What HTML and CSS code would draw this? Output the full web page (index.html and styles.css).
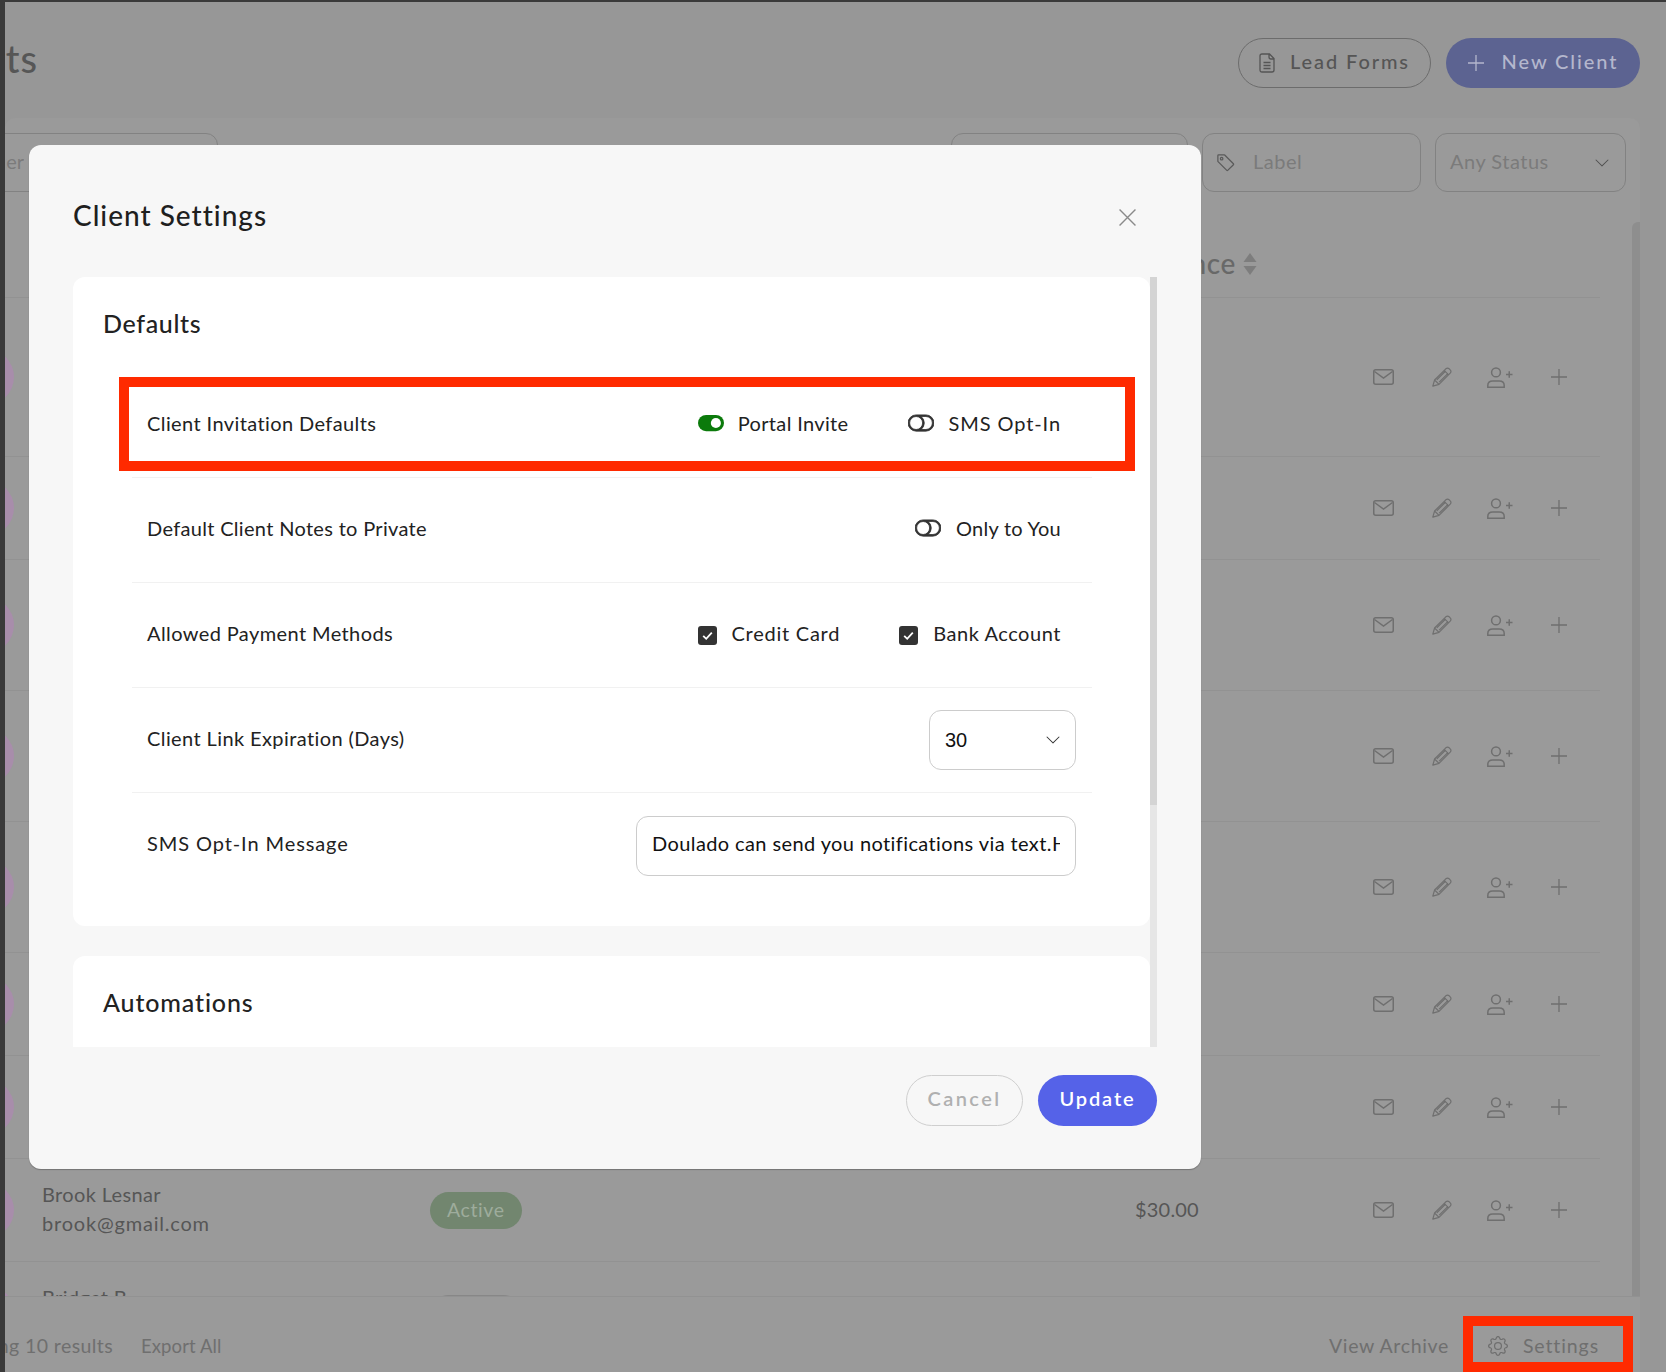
FILE: index.html
```html
<!DOCTYPE html>
<html lang="en">
<head>
<meta charset="utf-8">
<title>Client Settings</title>
<link rel="stylesheet" href="styles.css">
</head>
<body>
<svg class="defs" width="0" height="0">
  <defs>
    <symbol id="i-mail" viewBox="0 0 21 16"><rect x=".75" y=".75" width="19.5" height="14.5" rx="2" fill="none" stroke="currentColor" stroke-width="1.5"/><path d="M1.5 2.5 10.5 9l9-6.500" fill="none" stroke="currentColor" stroke-width="1.5"/></symbol>
    <symbol id="i-pencil" viewBox="0 0 20 20"><path d="M.8 19.200 2.600 13 13.800 1.800q1.800-1.500 3.400 0l1 1q1.500 1.600 0 3.400L7 17.400zM2.600 13l4.400 4.400M12.200 3.400l4.400 4.400M4.800 12.800l8.800-8.800M7.200 15.200 16 6.400" fill="none" stroke="currentColor" stroke-width="1.200" stroke-linejoin="round"/></symbol>
    <symbol id="i-user" viewBox="0 0 26 21"><circle cx="9" cy="5.400" r="4.400" fill="none" stroke="currentColor" stroke-width="1.500"/><path d="M.8 20.200v-1.700q0-4.500 5-4.500h6.400q5 0 5 4.500v1.700zM19 7.500h6.500M22.250 4.200v6.600" fill="none" stroke="currentColor" stroke-width="1.500"/></symbol>
    <symbol id="i-plus" viewBox="0 0 16 16"><path d="M8 0v16M0 8h16" fill="none" stroke="currentColor" stroke-width="1.300"/></symbol>
    <symbol id="i-x" viewBox="0 0 16 16"><path d="M.5.500l15 15M15.500.500l-15 15" fill="none" stroke="currentColor" stroke-width="1.300"/></symbol>
    <symbol id="i-chev" viewBox="0 0 16 16"><path fill="currentColor" fill-rule="evenodd" d="M1.646 4.646a.5.5 0 0 1 .708 0L8 10.293l5.646-5.647a.5.5 0 0 1 .708.708l-6 6a.5.5 0 0 1-.708 0l-6-6a.5.5 0 0 1 0-.708z"/></symbol>
    <symbol id="i-off" viewBox="0 0 16 16"><path fill="currentColor" stroke="currentColor" stroke-width=".5" d="M11 4a4 4 0 0 1 0 8H8a4.992 4.992 0 0 0 2-4 4.992 4.992 0 0 0-2-4h3zm-6 8a4 4 0 1 1 0-8 4 4 0 0 1 0 8zM0 8a5 5 0 0 0 5 5h6a5 5 0 0 0 0-10H5a5 5 0 0 0-5 5z"/></symbol>
    <symbol id="i-on" viewBox="0 0 16 16"><path fill="currentColor" d="M5 3h6a5 5 0 0 1 0 10H5A5 5 0 0 1 5 3z"/><circle cx="11" cy="8" r="3.100" fill="#fff"/></symbol>
    <symbol id="i-check" viewBox="0 0 19 19"><rect width="19" height="19" rx="3" fill="#333"/><path d="M5.200 9.800l3 3 5.600-6.200" fill="none" stroke="#fff" stroke-width="1.800"/></symbol>
    <symbol id="i-doc" viewBox="0 0 16 20"><path d="M1 3q0-2 2-2h7.500L15 5.500V17q0 2-2 2H3q-2 0-2-2zM10 1v3q0 2 2 2h3M4.500 9.500h7M4.500 12.500h7M4.500 15.500h7" fill="none" stroke="currentColor" stroke-width="1.300"/></symbol>
    <symbol id="i-tag" viewBox="0 0 16 16"><path fill="currentColor" d="M6 4.500a1.500 1.500 0 1 1-3 0 1.500 1.500 0 0 1 3 0zm-1 0a.5.5 0 1 0-1 0 .5.5 0 0 0 1 0z"/><path fill="currentColor" d="M2 1h4.586a1 1 0 0 1 .707.293l7 7a1 1 0 0 1 0 1.414l-4.586 4.586a1 1 0 0 1-1.414 0l-7-7A1 1 0 0 1 1 6.586V2a1 1 0 0 1 1-1zm0 5.586 7 7L13.586 9l-7-7H2v4.586z"/></symbol>
    <symbol id="i-gear" viewBox="0 0 16 16"><path fill="currentColor" d="M8 4.754a3.246 3.246 0 1 0 0 6.492 3.246 3.246 0 0 0 0-6.492zM5.754 8a2.246 2.246 0 1 1 4.492 0 2.246 2.246 0 0 1-4.492 0z"/><path fill="currentColor" d="M9.796 1.343c-.527-1.790-3.065-1.790-3.592 0l-.094.319a.873.873 0 0 1-1.255.520l-.292-.160c-1.640-.892-3.433.902-2.540 2.541l.159.292a.873.873 0 0 1-.520 1.255l-.319.094c-1.790.527-1.790 3.065 0 3.592l.319.094a.873.873 0 0 1 .520 1.255l-.160.292c-.892 1.640.901 3.434 2.541 2.540l.292-.159a.873.873 0 0 1 1.255.520l.094.319c.527 1.790 3.065 1.790 3.592 0l.094-.319a.873.873 0 0 1 1.255-.520l.292.160c1.640.893 3.434-.902 2.540-2.541l-.159-.292a.873.873 0 0 1 .520-1.255l.319-.094c1.790-.527 1.790-3.065 0-3.592l-.319-.094a.873.873 0 0 1-.520-1.255l.160-.292c.893-1.640-.902-3.433-2.541-2.540l-.292.159a.873.873 0 0 1-1.255-.520l-.094-.319zm-2.633.283c.246-.835 1.428-.835 1.674 0l.094.319a1.873 1.873 0 0 0 2.693 1.115l.291-.160c.764-.415 1.600.420 1.184 1.185l-.159.292a1.873 1.873 0 0 0 1.116 2.692l.318.094c.835.246.835 1.428 0 1.674l-.319.094a1.873 1.873 0 0 0-1.115 2.693l.160.291c.415.764-.420 1.600-1.185 1.184l-.291-.159a1.873 1.873 0 0 0-2.693 1.116l-.094.318c-.246.835-1.428.835-1.674 0l-.094-.319a1.873 1.873 0 0 0-2.692-1.115l-.292.160c-.764.415-1.600-.420-1.184-1.185l.159-.291A1.873 1.873 0 0 0 1.945 8.930l-.319-.094c-.835-.246-.835-1.428 0-1.674l.319-.094A1.873 1.873 0 0 0 3.060 4.377l-.160-.292c-.415-.764.420-1.600 1.185-1.184l.292.159a1.873 1.873 0 0 0 2.692-1.115l.094-.319z"/></symbol>
    <symbol id="i-sort" viewBox="0 0 14 22"><path fill="currentColor" d="M7 0l6.500 9H.5zM7 22 .5 13h13z"/></symbol>
  </defs>
</svg>

<div class="frame">
  <div class="page">
    <header class="topbar">
      <div class="clip-left title-clip"><h1 class="page-title">Clients</h1></div>
      <div class="top-actions">
        <button class="pill-btn pill-ghost"><svg class="ic-doc"><use href="#i-doc"/></svg><span>Lead Forms</span></button>
        <button class="pill-btn pill-primary"><svg class="ic-plus-lg"><use href="#i-plus"/></svg><span>New Client</span></button>
      </div>
    </header>

    <section class="panel">
      <div class="filters">
        <div class="field field-search"><div class="clip-left search-clip"><span>Search by Name or Filter</span></div></div>
        <div class="field field-date"></div>
        <div class="field field-label"><svg class="ic-tag"><use href="#i-tag"/></svg><span class="field-text">Label</span></div>
        <div class="field field-status"><span class="field-text">Any Status</span><svg class="ic-chev-bg"><use href="#i-chev"/></svg></div>
      </div>

      <div class="table-wrap">
        <div class="table">
          <div class="thead"><span class="th-balance">Balance</span><svg class="ic-sort"><use href="#i-sort"/></svg></div>

          <div class="row row-a"><i class="avatar"></i><div class="who"></div><span></span><span></span><div class="actions"><svg class="ic-mail"><use href="#i-mail"/></svg><svg class="ic-pencil"><use href="#i-pencil"/></svg><svg class="ic-user"><use href="#i-user"/></svg><svg class="ic-plus"><use href="#i-plus"/></svg></div></div>
          <div class="row row-s"><i class="avatar"></i><div class="who"></div><span></span><span></span><div class="actions"><svg class="ic-mail"><use href="#i-mail"/></svg><svg class="ic-pencil"><use href="#i-pencil"/></svg><svg class="ic-user"><use href="#i-user"/></svg><svg class="ic-plus"><use href="#i-plus"/></svg></div></div>
          <div class="row row-t"><i class="avatar"></i><div class="who"></div><span></span><span></span><div class="actions"><svg class="ic-mail"><use href="#i-mail"/></svg><svg class="ic-pencil"><use href="#i-pencil"/></svg><svg class="ic-user"><use href="#i-user"/></svg><svg class="ic-plus"><use href="#i-plus"/></svg></div></div>
          <div class="row row-t"><i class="avatar"></i><div class="who"></div><span></span><span></span><div class="actions"><svg class="ic-mail"><use href="#i-mail"/></svg><svg class="ic-pencil"><use href="#i-pencil"/></svg><svg class="ic-user"><use href="#i-user"/></svg><svg class="ic-plus"><use href="#i-plus"/></svg></div></div>
          <div class="row row-t"><i class="avatar"></i><div class="who"></div><span></span><span></span><div class="actions"><svg class="ic-mail"><use href="#i-mail"/></svg><svg class="ic-pencil"><use href="#i-pencil"/></svg><svg class="ic-user"><use href="#i-user"/></svg><svg class="ic-plus"><use href="#i-plus"/></svg></div></div>
          <div class="row row-s"><i class="avatar"></i><div class="who"></div><span></span><span></span><div class="actions"><svg class="ic-mail"><use href="#i-mail"/></svg><svg class="ic-pencil"><use href="#i-pencil"/></svg><svg class="ic-user"><use href="#i-user"/></svg><svg class="ic-plus"><use href="#i-plus"/></svg></div></div>
          <div class="row row-s"><i class="avatar"></i><div class="who"></div><span></span><span></span><div class="actions"><svg class="ic-mail"><use href="#i-mail"/></svg><svg class="ic-pencil"><use href="#i-pencil"/></svg><svg class="ic-user"><use href="#i-user"/></svg><svg class="ic-plus"><use href="#i-plus"/></svg></div></div>
          <div class="row row-s"><i class="avatar"></i><div class="who"><div>Brook Lesnar</div><div class="email">brook@gmail.com</div></div><div class="status-cell"><span class="status status-active">Active</span></div><span class="amount">$30.00</span><div class="actions"><svg class="ic-mail"><use href="#i-mail"/></svg><svg class="ic-pencil"><use href="#i-pencil"/></svg><svg class="ic-user"><use href="#i-user"/></svg><svg class="ic-plus"><use href="#i-plus"/></svg></div></div>
          <div class="row row-s"><i class="avatar"></i><div class="who who-single"><div>Bridget B</div></div><div class="status-cell"><span class="status status-grey">New</span></div><span class="amount"></span><div class="actions"></div></div>
        </div>
        <div class="bg-scroll"></div>
      </div>

      <footer class="foot">
        <div class="clip-left foot-clip"><span>Showing 10 results</span></div>
        <a class="foot-link foot-export">Export All</a>
        <a class="foot-link foot-archive">View Archive</a>
        <a class="foot-link foot-settings"><svg class="ic-gear"><use href="#i-gear"/></svg>Settings</a>
      </footer>
    </section>
  </div>

  <div class="mark mark-settings"></div>

  <div class="modal">
    <div class="modal-head">
      <h2 class="modal-title">Client Settings</h2>
      <svg class="ic-close"><use href="#i-x"/></svg>
    </div>
    <div class="modal-body">
      <div class="modal-scroll">
        <section class="card card-defaults">
          <h3 class="card-title">Defaults</h3>
          <div class="set-rows">
            <div class="set-row">
              <span class="set-label">Client Invitation Defaults</span>
              <div class="opts">
                <label class="opt opt-portal"><svg class="tog tog-on"><use href="#i-on"/></svg>Portal Invite</label>
                <label class="opt opt-wide"><svg class="tog"><use href="#i-off"/></svg>SMS Opt-In</label>
              </div>
            </div>
            <div class="set-row">
              <span class="set-label set-label-tight">Default Client Notes to Private</span>
              <div class="opts">
                <label class="opt opt-tight"><svg class="tog"><use href="#i-off"/></svg>Only to You</label>
              </div>
            </div>
            <div class="set-row">
              <span class="set-label">Allowed Payment Methods</span>
              <div class="opts">
                <label class="opt opt-cc"><svg class="chk"><use href="#i-check"/></svg>Credit Card</label>
                <label class="opt opt-ba"><svg class="chk"><use href="#i-check"/></svg>Bank Account</label>
              </div>
            </div>
            <div class="set-row">
              <span class="set-label">Client Link Expiration (Days)</span>
              <div class="select"><span>30</span><svg class="ic-chev"><use href="#i-chev"/></svg></div>
            </div>
            <div class="set-row set-row-last">
              <span class="set-label set-label-wide">SMS Opt-In Message</span>
              <input class="text-input" type="text" value="Doulado can send you notifications via text.Help" readonly>
            </div>
          </div>
        </section>
        <section class="card card-auto">
          <h3 class="card-title">Automations</h3>
        </section>
      </div>
      <div class="modal-track"><div class="modal-thumb"></div></div>
    </div>
    <div class="modal-foot">
      <button class="m-btn m-cancel">Cancel</button>
      <button class="m-btn m-update">Update</button>
    </div>
  </div>

  <div class="mark mark-row"></div>
</div>
</body>
</html>
```

FILE: styles.css
```css
* { box-sizing: border-box; }
html, body { margin: 0; padding: 0; }
body { font-family: "Lato", "Liberation Sans", sans-serif; background: #3a3a3a; }
.defs { position: absolute; }

.frame {
  position: relative;
  width: 1666px;
  height: 1372px;
  overflow: hidden;
  padding: 2px 0 0 5px;
  background: #3a3a3a;
}
.page {
  height: 1370px;
  background: #979797;
  overflow: hidden;
  display: flex;
  flex-direction: column;
}

/* top bar */
.topbar {
  flex: none;
  height: 116px;
  display: flex;
  align-items: flex-start;
  justify-content: space-between;
  padding: 36px 26px 0 0;
}
.clip-left { display: flex; justify-content: flex-end; overflow: hidden; white-space: nowrap; }
.clip-left > * { flex: none; }
.title-clip { width: 33px; margin-top: -2px; }
.page-title { margin: 0; font-size: 38px; line-height: 44px; font-weight: 500; color: #565656; letter-spacing: 1px; }
.top-actions { display: flex; gap: 15px; }
.pill-btn {
  height: 50px;
  border-radius: 25px;
  font: 500 20px "Lato", sans-serif;
  letter-spacing: 1.900px;
  display: flex;
  align-items: center;
  justify-content: center;
  padding: 0;
}
.pill-btn span { padding-bottom: 4px; }
.pill-ghost { width: 193px; background: transparent; border: 1px solid #6c6c6c; color: #555; gap: 15px; }
.pill-primary { width: 194px; background: #5c6391; border: 0; color: #b4b7cd; gap: 18px; }
.ic-doc { width: 16px; height: 20px; color: #555; }
.ic-plus-lg { width: 16px; height: 16px; color: #b4b7cd; }

/* panel */
.panel {
  flex: 1;
  width: 1635px;
  background: #9a9a9a;
  border-radius: 10px 10px 0 0;
  display: flex;
  flex-direction: column;
  min-height: 0;
}
.filters { flex: none; display: flex; align-items: stretch; height: 104px; padding: 15px 14px 30px 0; gap: 14px; }
.field {
  height: 59px;
  border: 1px solid #828282;
  border-radius: 12px;
  display: flex;
  align-items: center;
  font-size: 20px;
  color: #7b7b7b;
}
.field-text { padding-bottom: 4px; letter-spacing: .5px; }
.field-search { width: 233px; margin-left: -20px; padding-right: 10px; justify-content: flex-start; }
.search-clip { margin-left: 20px; width: 18px; margin-top: -3px; }
.field-date { width: 237px; margin-left: auto; }
.field-label { width: 219px; padding-left: 13px; gap: 17px; }
.field-status { width: 191px; padding: 0 15px 0 14px; justify-content: space-between; }
.ic-tag { width: 20px; height: 20px; color: #5a5a5a; }
.ic-chev-bg { width: 16px; height: 16px; color: #4f4f4f; }

/* table */
.table-wrap { flex: 1; display: flex; justify-content: space-between; min-height: 0; }
.table { width: 1595px; overflow: hidden; font-size: 20px; color: #565656; }
.thead {
  height: 76px;
  border-bottom: 1px solid #929292;
  display: flex;
  align-items: center;
  justify-content: flex-end;
  padding: 8px 343px 0 0;
  gap: 7px;
}
.th-balance { font-size: 28px; font-weight: 500; color: #686868; letter-spacing: .6px; padding-bottom: 2px; }
.ic-sort { width: 14px; height: 22px; color: #7d7d7d; }
.row {
  display: grid;
  grid-template-columns: 37px 388px 705px 238px 1fr;
  align-items: center;
  border-bottom: 1px solid #929292;
}
.row-a { height: 159px; }
.row-s { height: 103px; }
.row-t { height: 131px; }
.avatar { display: block; width: 56px; height: 56px; border-radius: 50%; margin-left: -47px; background: #a88dab; }
.who { line-height: 29px; letter-spacing: .35px; padding-bottom: 3px; }
.who-single { padding-bottom: 32px; }
.email { letter-spacing: .8px; }
.status-cell { display: flex; }
.status { display: inline-flex; align-items: center; justify-content: center; height: 37px; border-radius: 19px; padding: 0 17px 2px; font-size: 19.500px; letter-spacing: .6px; }
.status-active { background: #72866f; color: #9eac9c; }
.status-grey { background: #878787; color: #9a9a9a; width: 92px; }
.amount { color: #565656; letter-spacing: .2px; padding-bottom: 2px; }
.actions { display: flex; align-items: center; }
.actions svg { color: #6f6f6f; flex: none; }
.ic-mail { width: 21px; height: 16px; margin-right: 38px; }
.ic-pencil { width: 20px; height: 20px; margin-right: 35px; }
.ic-user { width: 26px; height: 21px; margin-right: 38px; }
.ic-plus { width: 16px; height: 16px; }
.bg-scroll { width: 8px; background: #8e8e8e; border-radius: 6px 0 0 0; }

/* footer */
.foot {
  flex: none;
  height: 76px;
  border-top: 1px solid #929292;
  display: flex;
  align-items: center;
  padding: 0 41px 0 0;
  font-size: 19.500px;
  color: #6f6f6f;
}
.foot > * { position: relative; top: 11px; }
.foot-clip { width: 108px; letter-spacing: .4px; }
.foot-link { white-space: nowrap; letter-spacing: .65px; }
.foot-export { margin-left: 28px; font-size: 18.500px; letter-spacing: .1px; }
.foot-archive { margin-left: auto; }
.foot-settings { display: flex; align-items: center; gap: 15px; margin-left: 39px; letter-spacing: .9px; }
.ic-gear { width: 20px; height: 20px; color: #6f6f6f; }

/* annotation marks */
.mark { position: absolute; border: 10px solid #ff2a00; }
.mark-settings { left: 1463px; top: 1316px; width: 170px; height: 56px; }
.mark-row { left: 119px; top: 377px; width: 1016px; height: 94px; }

/* modal */
.modal {
  position: absolute;
  left: 29px;
  top: 145px;
  width: 1172px;
  height: 1024px;
  background: #f7f7f7;
  border-radius: 12px;
  padding: 0 44px;
  display: flex;
  flex-direction: column;
  box-shadow: 0 1px 1px rgba(0,0,0,.25);
}
.modal-head { flex: none; height: 132px; display: flex; align-items: flex-start; justify-content: space-between; padding-top: 51px; }
.modal-title { margin: 0; font-size: 28px; line-height: 38px; font-weight: 500; color: #1f1f1f; letter-spacing: 1px; }
.ic-close { width: 17px; height: 17px; color: #8a8a8a; margin: 13px 21px 0 0; }
.modal-body { flex: none; height: 770px; display: flex; overflow: hidden; }
.modal-scroll { width: 1077px; height: 770px; overflow: hidden; display: flex; flex-direction: column; gap: 30px; }
.modal-track { width: 7px; background: #e6e6e6; }
.modal-thumb { height: 528px; background: #d4d4d4; }
.card { flex: none; background: #fff; border-radius: 12px; padding: 0 30px; }
.card-defaults { height: 649px; }
.card-auto { height: 200px; }
.card-title { margin: 0; padding-top: 29px; font-size: 25px; line-height: 34px; font-weight: 500; color: #222; letter-spacing: .65px; }
.card-auto .card-title { letter-spacing: .85px; }
.set-rows { margin: 33px 28px 0 29px; }
.set-row {
  height: 105px;
  display: flex;
  align-items: center;
  justify-content: space-between;
  padding: 0 31px 0 15px;
  border-bottom: 1px solid #f1f1f1;
  font-size: 20px;
  letter-spacing: .4px;
  color: #222;
}
.set-label { padding-bottom: 4px; }
.set-row-last .set-label { padding-bottom: 6px; }
.set-label-wide { letter-spacing: .9px; }
.set-label-tight { letter-spacing: .32px; }
.set-row-last { border-bottom: 0; }
.opts { display: flex; align-items: center; gap: 59px; padding-bottom: 4px; }
.opt { display: flex; align-items: center; gap: 15px; white-space: nowrap; }
.opt-portal { gap: 14px; letter-spacing: .35px; }
.opt-wide { letter-spacing: .9px; }
.opt-tight { letter-spacing: .25px; }
.opt-cc { letter-spacing: .75px; }
.opt-ba { letter-spacing: .55px; }
.tog { width: 26px; height: 26px; color: #333; }
.tog-on { color: #0b7a0b; }
.chk { width: 19px; height: 19px; position: relative; top: 2px; }
.select {
  width: 147px;
  height: 60px;
  margin-right: -15px;
  border: 1px solid #ccc;
  border-radius: 12px;
  padding: 0 14px 0 15px;
  display: flex;
  align-items: center;
  justify-content: space-between;
  font: 400 20px "Liberation Sans", sans-serif;
  letter-spacing: 0;
  color: #111;
}
.ic-chev { width: 16px; height: 16px; color: #333; }
.text-input {
  width: 440px;
  height: 60px;
  margin-right: -15px;
  border: 1px solid #ccc;
  border-radius: 12px;
  padding: 0 15px 5px;
  background: #fff;
  font: 400 20px "Lato", sans-serif;
  letter-spacing: .4px;
  color: #111;
  outline: 0;
}
.modal-foot { flex: 1; display: flex; justify-content: flex-end; gap: 15px; padding-top: 28px; }
.m-btn { height: 51px; border-radius: 26px; font: 600 20px "Lato", sans-serif; padding: 0 0 5px; }
.m-cancel { width: 117px; background: transparent; border: 1px solid #cfcfcf; color: #b0b0b0; letter-spacing: 2.400px; }
.m-update { width: 119px; background: #5562e8; border: 0; color: #fff; letter-spacing: 1.900px; }
```
